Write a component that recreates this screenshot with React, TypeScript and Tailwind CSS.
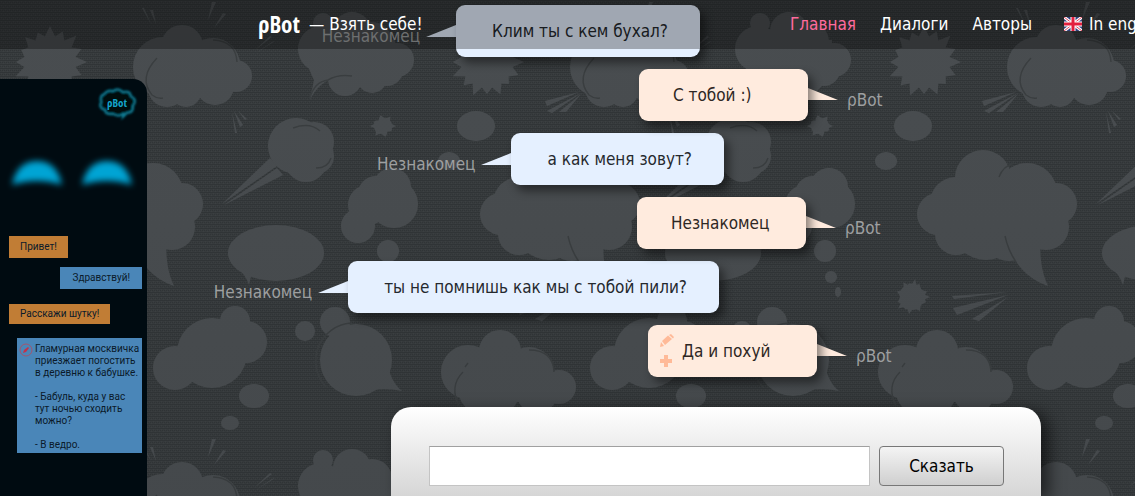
import React from 'react';

interface Message {
    author: 'user' | 'bot';
    text: string;
    offset: string;
    editable?: boolean;
}

const messages: Message[] = [
    { author: 'user', text: 'Клим ты с кем бухал?', offset: 'mr-[341px]' },
    { author: 'bot', text: 'С тобой :)', offset: 'ml-[248px]' },
    { author: 'user', text: 'а как меня зовут?', offset: 'mr-[317px]' },
    { author: 'bot', text: 'Незнакомец', offset: 'ml-[246px]' },
    { author: 'user', text: 'ты не помнишь как мы с тобой пили?', offset: 'mr-[322px]' },
    { author: 'bot', text: 'Да и похуй', offset: 'ml-[257px]', editable: true },
];

// Spiky circle used for the comic "bang" shapes
const burst = (cx: number, cy: number, inner: number, outer: number, spikes: number) => {
    const points: string[] = [];
    for (let i = 0; i < spikes * 2; i++) {
        const r = i % 2 ? inner : outer - ((i * 5) % 7);
        const a = (Math.PI * i) / spikes;
        points.push(`${(cx + r * Math.cos(a)).toFixed(1)},${(cy + r * Math.sin(a)).toFixed(1)}`);
    }
    return points.join(' ');
};

const Wallpaper: React.FC = () => (
    <svg className="absolute inset-0 w-full h-full" aria-hidden="true">
        <defs>
            <pattern id="weave" width="4" height="4" patternUnits="userSpaceOnUse">
                <rect width="4" height="4" fill="#383c3e" />
                <path d="M0 0.5h4M0 2.5h1M2 2.5h1" stroke="#313537" />
                <path d="M1 1.5h1M3 3.5h1" stroke="#3d4143" />
            </pattern>
            <pattern id="comic" width="437" height="437" patternUnits="userSpaceOnUse">
                <g fill="#494d50">
                    {/* big cloud, top */}
                    <circle cx="182" cy="46" r="21" />
                    <circle cx="163" cy="67" r="30" />
                    <circle cx="213" cy="65" r="27" />
                    <circle cx="236" cy="76" r="16" />
                    <circle cx="167" cy="88" r="19" />
                    <circle cx="186" cy="92" r="15" />
                    <circle cx="215" cy="86" r="19" />
                    <rect x="160" y="50" width="60" height="48" />
                    {/* bursts */}
                    <polygon points={burst(50, 62, 26, 37, 16)} />
                    <polygon points={burst(383, 126, 9, 13, 14)} />
                    <polygon points={burst(38, 297, 13, 18, 18)} />
                    {/* cloud with a curved tail */}
                    <circle cx="323" cy="23" r="10" />
                    <circle cx="352" cy="31" r="19" />
                    <circle cx="321" cy="49" r="23" />
                    <circle cx="372" cy="42" r="20" />
                    <circle cx="397" cy="60" r="17" />
                    <circle cx="387" cy="70" r="16" />
                    <circle cx="345" cy="79" r="17" />
                    <circle cx="372" cy="78" r="15" />
                    <path d="M306 60Q310 72 314 80Q312 90 310 100Q318 82 338 76L395 80V40H320Z" />
                    {/* flying bomb */}
                    <circle cx="296" cy="146" r="28" />
                    <circle cx="314" cy="142" r="20" />
                    <circle cx="306" cy="161" r="21" />
                    <circle cx="316" cy="156" r="18" />
                    <path d="M270 158L222 204L277 166ZM277 168L224 205L283 175Z" />
                    {/* bubbles */}
                    <ellipse cx="39" cy="126" rx="19" ry="15" />
                    <ellipse cx="12" cy="161" rx="11" ry="9" />
                    <circle cx="376" cy="194" r="18" />
                    <circle cx="392" cy="187" r="19" />
                    <circle cx="358" cy="226" r="17" />
                    <circle cx="368" cy="205" r="20" />
                    <circle cx="394" cy="204" r="24" />
                    <circle cx="388" cy="251" r="11" />
                    <circle cx="394" cy="277" r="6" />
                    <ellipse cx="401" cy="292" rx="3" ry="5" />
                    {/* huge cloud */}
                    <circle cx="109" cy="178" r="28" />
                    <circle cx="153" cy="193" r="30" />
                    <circle cx="82" cy="203" r="26" />
                    <circle cx="64" cy="214" r="21" />
                    <circle cx="182" cy="204" r="21" />
                    <circle cx="172" cy="227" r="23" />
                    <circle cx="82" cy="234" r="21" />
                    <circle cx="112" cy="225" r="35" />
                    <circle cx="135" cy="235" r="26" />
                    <path d="M133 240Q142 275 174 286Q164 265 167 235Z" />
                    {/* oval speech */}
                    <ellipse cx="276" cy="253" rx="48" ry="28" />
                    <path d="M236 266Q246 275 249 285L252 272Z" />
                    {/* thought cloud */}
                    <circle cx="235" cy="321" r="15" />
                    <circle cx="212" cy="353" r="35" />
                    <circle cx="246" cy="342" r="21" />
                    <circle cx="175" cy="368" r="22" />
                    <ellipse cx="254" cy="396" rx="15" ry="12" />
                    <ellipse cx="230" cy="423" rx="9" ry="7" />
                    <circle cx="305" cy="331" r="10" />
                    {/* round speech */}
                    <circle cx="335" cy="322" r="15" />
                    <circle cx="356" cy="360" r="36" />
                    <path d="M385 345Q387 380 402 391Q380 386 362 393Z" />
                    {/* cloud, bottom */}
                    <circle cx="63" cy="351" r="21" />
                    <circle cx="31" cy="372" r="27" />
                    <circle cx="92" cy="372" r="25" />
                    <circle cx="122" cy="387" r="17" />
                    <circle cx="42" cy="392" r="20" />
                    <circle cx="64" cy="396" r="17" />
                    <circle cx="100" cy="392" r="21" />
                    <rect x="36" y="354" width="68" height="48" />
                    {/* speed streaks */}
                    <path d="M78 296L134 292L80 299ZM79 308L134 295L83 315ZM98 319L134 297L105 321Z" />
                    <path d="M108 101L142 92L110 106ZM110 111L144 93L115 113ZM122 112L144 94L129 112Z" />
                    <path d="M142 8L151 24L144 8ZM150 10L156 24L153 10ZM212 2L208 20L216 2ZM226 14L214 28L223 13ZM272 37L255 50L270 36ZM272 42L256 53L275 41Z" />
                    <path d="M232 112L235 133L237 133ZM234 111L240 127L243 125ZM238 111L245 120L247 119Z" />
                </g>
                <g fill="none" stroke="#3a3e40" strokeWidth="1.5">
                    <path d="M157 58Q138 78 152 95Q157 99 163 98" />
                    <path d="M213 40Q236 41 237 62" />
                    <path d="M293 128Q310 122 320 131M316 168Q328 168 331 158" />
                    <path d="M310 98Q314 82 328 80Q338 74 352 76" />
                    <path d="M125 177Q129 166 140 163M131 236Q134 250 142 262" />
                    <path d="M31 363L28 367M26 372Q12 386 22 406" />
                    <path d="M92 350Q116 350 117 372" />
                </g>
                <path d="M351 323A38 38 0 0 0 326 387" fill="none" stroke="#3a3e40" strokeWidth="1.5" />
            </pattern>
            <linearGradient id="shade" x1="0" y1="0" x2="0" y2="1">
                <stop offset="0" stopColor="#1d2124" stopOpacity="0" />
                <stop offset="1" stopColor="#1d2124" stopOpacity="0.1" />
            </linearGradient>
        </defs>
        <rect width="100%" height="100%" fill="url(#weave)" />
        <rect width="100%" height="100%" fill="url(#comic)" />
        <rect width="100%" height="100%" fill="url(#shade)" />
    </svg>
);

const FlagIcon: React.FC = () => (
    <svg className="w-[18px] h-[14px]" viewBox="0 0 18 14" aria-hidden="true">
        <rect width="18" height="14" fill="#32417f" />
        <path d="M0 0L18 14M18 0L0 14" stroke="#fff" strokeWidth="3" />
        <path d="M0 0L18 14M18 0L0 14" stroke="#e0455c" />
        <path d="M9 0V14M0 7H18" stroke="#fff" strokeWidth="5" />
        <path d="M9 0V14M0 7H18" stroke="#e3203f" strokeWidth="3" />
    </svg>
);

const Header: React.FC = () => (
    <header className="absolute inset-x-0 top-0 z-10 h-[49px] pl-[258px] pb-[2px] flex items-center overflow-hidden whitespace-nowrap bg-black/30 text-white">
        <a href="#home" className="w-[51px] shrink-0 text-[23px] leading-6 font-bold font-['Open_Sans_Condensed','DejaVu_Sans_Condensed',sans-serif]">ρBot</a>
        <a href="#get" className="w-[481px] shrink-0">— Взять себе!</a>
        <nav className="flex gap-6 shrink-0">
            <a href="#main" className="text-[#ff6b9d]">Главная</a>
            <a href="#dialogs">Диалоги</a>
            <a href="#authors">Авторы</a>
            <a href="#en" className="ml-2 flex items-center gap-[7px]"><FlagIcon />In english</a>
        </nav>
    </header>
);

const Sidebar: React.FC = () => (
    <aside className="relative mt-[79px] w-[147px] shrink-0 rounded-tr-[14px] bg-[#000b11] font-['Roboto',sans-serif] text-[10px] leading-3 text-[#0b1a2a]">
        <svg className="w-full h-[157px]" viewBox="0 0 147 157" role="img" aria-label="ρBot">
            <defs>
                <filter id="glow" x="-50%" y="-50%" width="200%" height="200%"><feGaussianBlur stdDeviation="3" /></filter>
                <filter id="soft" x="-20%" y="-20%" width="140%" height="140%"><feGaussianBlur stdDeviation="0.9" /></filter>
            </defs>
            <path d="M104 15Q108 10 113 12Q118 8 123 13Q130 11 131 17Q138 21 133 27Q134 34 127 34L123 38L124 34Q120 39 113 35Q105 36 105 31Q98 29 101 23Q99 17 104 15Z" fill="#000b11" stroke="#0f7f97" strokeWidth="2" filter="url(#soft)" />
            <text x="117" y="28" textAnchor="middle" fontSize="11" fontWeight="bold" fill="#14a5cc" fontFamily="Open Sans Condensed, DejaVu Sans Condensed, sans-serif">ρBot</text>
            <g fill="#00a4d4" filter="url(#glow)">
                <path d="M12 106Q17 82 37 82Q57 82 62 106Q37 98 12 106Z" />
                <path d="M82 106Q87 82 107 82Q127 82 132 106Q107 98 82 106Z" />
            </g>
        </svg>
        <div className="flex flex-col items-start">
            <p className="ml-[9px] px-[11px] py-[5px] bg-[#c17d35]">Привет!</p>
            <p className="mt-[9px] mr-[5px] self-end px-3 py-[5px] bg-[#4a86b8]">Здравствуй!</p>
            <p className="mt-[15px] ml-[9px] px-[11px] py-1 bg-[#c17d35]">Расскажи шутку!</p>
            <div className="mt-[14px] ml-[17px] mr-[5px] self-stretch flex gap-[2px] pl-[2px] pt-[5px] pb-[2px] bg-[#4a86b8] whitespace-nowrap">
                <svg className="w-[14px] h-[14px] shrink-0" viewBox="0 0 14 14" aria-hidden="true">
                    <circle cx="7" cy="7" r="6" fill="none" stroke="#a4546c" />
                    <path d="M4 10L5 7L9 4L10 5L7 9Z" fill="#c3324a" />
                </svg>
                <p>
                    Гламурная москвичка<br />приезжает погостить<br />в деревню к бабушке.<br /><br />
                    - Бабуль, куда у вас<br />тут ночью сходить<br />можно?<br /><br />- В ведро.
                </p>
            </div>
        </div>
    </aside>
);

const ChatMessage: React.FC<{ message: Message }> = ({ message }) => {
    if (message.author === 'user') {
        return (
            <div className={`flex justify-end whitespace-nowrap ${message.offset}`}>
                <span className="mt-[19px] mr-[6px] text-[#9d9fa0]">Незнакомец</span>
                <svg className="mt-[20px] w-[30px] h-3 shrink-0" viewBox="0 0 30 12" aria-hidden="true"><path d="M30 0V12H0Z" fill="#e5f0ff" /></svg>
                <p className="h-[52px] pl-9 pr-8 flex items-center rounded-[9px] bg-[#e5f0ff] text-[#25292e] shadow-[5px_6px_10px_rgba(0,0,0,0.45)]">{message.text}</p>
            </div>
        );
    }
    return (
        <div className={`flex whitespace-nowrap ${message.offset}`}>
            <div className="relative h-[52px] min-w-[169px] px-[34px] flex items-center rounded-[9px] bg-[#ffebde] text-[#2e2724] shadow-[5px_6px_10px_rgba(0,0,0,0.45)]">
                {message.editable && (
                    <div className="absolute left-3 top-[9px] flex flex-col gap-[7px]">
                        <button aria-label="Изменить" className="block">
                            <svg className="w-[14px] h-[14px]" viewBox="0 0 14 14" aria-hidden="true"><path d="M0 13L1 8L4 12ZM2 7L8 1.5L12 5L5 11ZM9 1L11 0L14 3L13 4.5Z" fill="#ffba98" /></svg>
                        </button>
                        <button aria-label="Добавить" className="block">
                            <svg className="w-3 h-3" viewBox="0 0 12 12" aria-hidden="true"><path d="M4 0H8V4H12V8H8V12H4V8H0V4H4Z" fill="#ffba98" /></svg>
                        </button>
                    </div>
                )}
                <p>{message.text}</p>
            </div>
            <svg className="mt-[19px] w-[30px] h-3 shrink-0" viewBox="0 0 30 12" aria-hidden="true"><path d="M0 0V12H30Z" fill="#ffebde" /></svg>
            <span className="mt-[19px] ml-[9px] text-[#9d9fa0]">ρBot</span>
        </div>
    );
};

const App: React.FC = () => (
    <div className="relative min-h-screen flex overflow-hidden bg-[#393d3f] font-['DejaVu_Sans_Condensed','DejaVu_Sans',sans-serif] text-[17px] leading-6">
        <Wallpaper />
        <Header />
        <Sidebar />
        <main className="relative flex-1 pl-[150px] pt-[5px] flex flex-col items-center">
            <div className="w-[650px] flex flex-col gap-3">
                {messages.map((message) => <ChatMessage key={message.text} message={message} />)}
            </div>
            <form className="mt-[30px] w-[650px] grow pl-[38px] pr-[37px] pt-[39px] pb-2 flex items-start gap-[9px] rounded-t-[20px] bg-linear-to-b from-white to-[#d6d6d6] shadow-[8px_4px_16px_rgba(0,0,0,0.55)]">
                <input type="text" aria-label="Сообщение" className="h-10 min-w-0 flex-1 px-3 bg-white border border-[#c4c4c4] border-t-[#a0a0a0]" />
                <button type="submit" className="h-10 w-[125px] rounded-[4px] border border-[#777] bg-linear-to-b from-[#f4f4f4] to-[#cfcfcf] text-black">Сказать</button>
            </form>
        </main>
    </div>
);

export default App;
